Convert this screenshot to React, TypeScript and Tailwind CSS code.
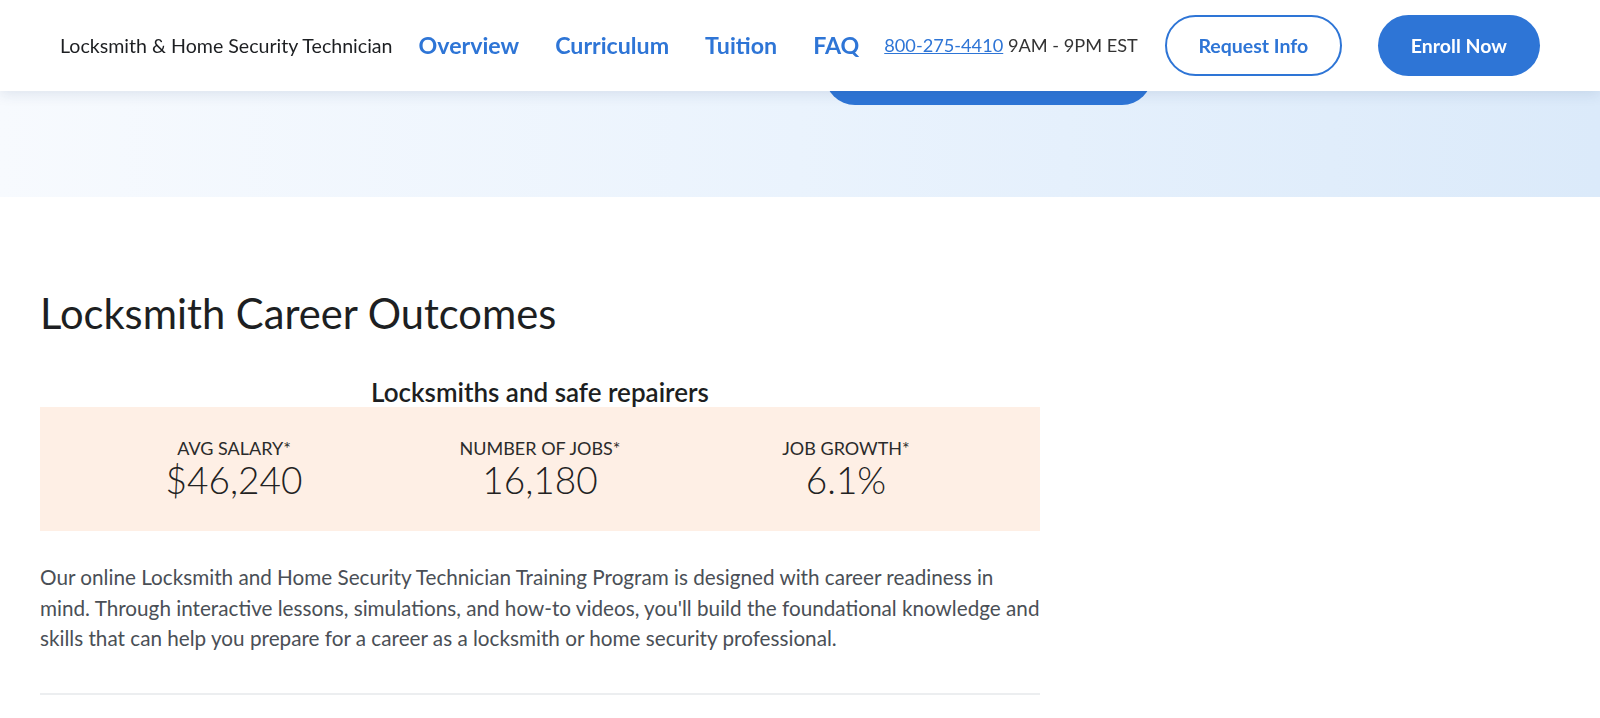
import React from "react";

const font = { fontFamily: '"Lato", "Open Sans", sans-serif' };

export default function App() {
  return (
    <div className="min-h-[718px] bg-white text-[#1d1f22]" style={font}>
      <header className="fixed inset-x-0 top-0 z-10 flex h-[91px] items-center bg-white px-[60px] shadow-[0_4px_12px_rgba(30,60,110,0.10)]">
        <div className="whitespace-nowrap text-[19.6px] text-[#1d1f22]">Locksmith &amp; Home Security Technician</div>
        <nav className="ml-[26px] flex items-center gap-[36px] text-[23.2px] font-bold text-[#2e75d6]">
          <a>Overview</a>
          <a>Curriculum</a>
          <a>Tuition</a>
          <a>FAQ</a>
        </nav>
        <div className="ml-[25px] whitespace-nowrap text-[18.2px] text-[#333]">
          <a className="text-[#2e75d6] underline">800-275-4410</a> 9AM - 9PM EST
        </div>
        <button className="ml-[27px] h-[61px] w-[177px] shrink-0 rounded-full border-2 border-[#2e75d6] bg-white text-[19.5px] font-bold text-[#2e75d6]">
          Request Info
        </button>
        <button className="ml-[36px] h-[61px] w-[162px] shrink-0 rounded-full bg-[#2e75d6] text-[19.5px] font-bold text-white">
          Enroll Now
        </button>
      </header>

      <section className="flex h-[197px] items-end bg-gradient-to-r from-[#f7fafe] via-[#eaf3fd] to-[#dbeafa] pb-[92px] pl-[825px]">
        <div className="h-[60px] w-[327px] rounded-full bg-[#2e75d6]" />
      </section>

      <main className="w-[1040px] pl-[40px]">
        <h2 className="mt-[92px] text-[41.7px] leading-[48px] text-[#1d1f22]">Locksmith Career Outcomes</h2>
        <h3 className="mt-[40px] text-center text-[26px] font-semibold leading-[30px] text-[#1d1f22]">
          Locksmiths and safe repairers
        </h3>
        <div className="flex h-[124px] items-center justify-center bg-[#feefe5]">
          {[
            ["AVG SALARY*", "$46,240"],
            ["NUMBER OF JOBS*", "16,180"],
            ["JOB GROWTH*", "6.1%"],
          ].map(([label, value]) => (
            <div key={label} className="flex w-[306px] flex-col items-center">
              <div className="text-[18px] leading-[22px] text-[#2b2b2b]">{label}</div>
              <div className="text-[37px] font-light leading-[42px] text-[#222]">{value}</div>
            </div>
          ))}
        </div>
        <p className="mt-[31px] text-[20.7px] leading-[30.6px] text-[#4a4f56]">
          Our online Locksmith and Home Security Technician Training Program is designed with career readiness in
          mind. Through interactive lessons, simulations, and how-to videos, you'll build the foundational knowledge and
          skills that can help you prepare for a career as a locksmith or home security professional.
        </p>
        <hr className="mt-[39px] border-t-2 border-[#eceef0]" />
      </main>
    </div>
  );
}
